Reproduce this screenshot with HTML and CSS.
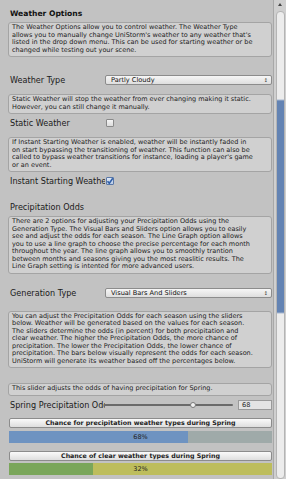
FILE: index.html
```html
<!DOCTYPE html>
<html>
<head>
<meta charset="utf-8">
<link rel="stylesheet" href="styles.css">
</head>
<body>
<div class="frame">
  <div class="content">
    <div class="title">Weather Options</div>
    <div class="help h1">The Weather Options allow you to control weather. The Weather Type<br>allows you to manually change UniStorm's weather to any weather that's<br>listed in the drop down menu. This can be used for starting weather or be<br>changed while testing out your scene.</div>

    <div class="row r-wtype">
      <div class="label">Weather Type</div>
      <div class="dropdown"><span>Partly Cloudy</span><span class="arrows">&#x2195;</span></div>
    </div>

    <div class="help h2">Static Weather will stop the weather from ever changing making it static.<br>However, you can still change it manually.</div>

    <div class="row r-static">
      <div class="label">Static Weather</div>
      <div class="check"></div>
    </div>

    <div class="help h3">If Instant Starting Weather is enabled, weather will be instantly faded in<br>on start bypassing the transitioning of weather. This function can also be<br>called to bypass weather transitions for instance, loading a player's game<br>or an event.</div>

    <div class="row r-instant">
      <div class="label">Instant Starting Weather</div>
      <div class="check checked"><svg viewBox="0 0 8 8" width="8" height="8"><path d="M1.5 4.2 L3.3 6.2 L6.8 1.2" fill="none" stroke="#2f5fa8" stroke-width="1.6"/></svg></div>
    </div>

    <div class="section">Precipitation Odds</div>
    <div class="help h4">There are 2 options for adjusting your Precipitation Odds using the<br>Generation Type. The Visual Bars and Sliders option allows you to easily<br>see and adjust the odds for each season. The Line Graph option allows<br>you to use a line graph to choose the precise percentage for each month<br>throughout the year. The line graph allows you to smoothly trantion<br>between months and seasons giving you the most reaslitic results. The<br>Line Graph setting is intented for more advanced users.</div>

    <div class="row r-gtype">
      <div class="label">Generation Type</div>
      <div class="dropdown"><span>Visual Bars And Sliders</span><span class="arrows">&#x2195;</span></div>
    </div>

    <div class="help h5">You can adjust the Precipitation Odds for each season using the sliders<br>below. Weather will be generated based on the values for each season.<br>The sliders determine the odds (in percent) for both precipitation and<br>clear weather. The higher the Precipitation Odds, the more chance of<br>precipitation. The lower the Precipitation Odds, the lower chance of<br>precipitation. The bars below visually represent the odds for each season.<br>UniStorm will generate its weather based off the percentages below.</div>

    <div class="help h6">This slider adjusts the odds of having precipitation for Spring.</div>

    <div class="row r-slider">
      <div class="label">Spring Precipitation Odds</div>
      <div class="slider"><div class="track"></div><div class="thumb"></div></div>
      <div class="num">68</div>
    </div>

    <div class="button b1">Chance for precipitation weather types during Spring</div>
    <div class="bar bar-precip"><div class="fill" style="width:68%"></div><span>68%</span></div>

    <div class="button b2">Chance of clear weather types during Spring</div>
    <div class="bar bar-clear"><div class="fill" style="width:32%"></div><span>32%</span></div>
  </div>
  <div class="scrollbar">
    <div class="up"></div>
    <div class="sb-track"><div class="sb-thumb"></div></div>
  </div>
</div>
</body>
</html>
```

FILE: styles.css
```css
* { box-sizing: border-box; }
html, body { margin: 0; padding: 0; }
body {
  width: 286px;
  height: 479px;
  overflow: hidden;
  background: #c2c2c2;
  font-family: "DejaVu Sans", Verdana, sans-serif;
  color: #1e1e1e;
}
.frame {
  display: flex;
  width: 286px;
  height: 479px;
}
.content {
  width: 273px;
  padding: 0 1px 0 8px;
  display: flex;
  flex-direction: column;
}
.title {
  margin-top: 9px;
  margin-left: 2px;
  font-weight: bold;
  font-size: 7.6px;
  line-height: 9px;
  height: 9px;
  color: #111;
}
.help {
  background: #d0d0d0;
  border: 1px solid #a4a4a4;
  border-radius: 3px;
  padding: 1px 2px 2px 3px;
  font-size: 6.5px;
  line-height: 7.5px;
  white-space: nowrap;
  overflow: hidden;
  color: #222;
}
.h1 { margin-top: 4px; }
.h2 { margin-top: 9px; }
.h3 { margin-top: 9px; }
.h4 { margin-top: 4px; }
.h5 { margin-top: 13px; }
.h6 { margin-top: 15px; }

.row {
  display: flex;
  align-items: center;
  height: 10px;
}
.label {
  width: 97px;
  flex: none;
  padding-left: 2px;
  font-size: 8.1px;
  line-height: 10px;
  white-space: nowrap;
  overflow: hidden;
  color: #1a1a1a;
}
.r-wtype { margin-top: 18px; }
.r-static { margin-top: 4px; }
.r-instant { margin-top: 4px; }
.r-gtype { margin-top: 14px; }
.r-slider { margin-top: 4px; }

.section {
  margin-top: 17px;
  padding-left: 2px;
  font-size: 8.1px;
  line-height: 9px;
  height: 9px;
  color: #1a1a1a;
}

.dropdown {
  flex: 1;
  height: 10px;
  border: 1px solid #8c8c8c;
  border-radius: 2px;
  background: linear-gradient(#f6f6f6, #dedede);
  display: flex;
  justify-content: space-between;
  align-items: center;
  padding: 0 3px 0 5px;
  font-size: 6.6px;
  line-height: 8px;
  color: #111;
}
.arrows {
  font-size: 5px;
  color: #333;
}

.check {
  width: 8px;
  height: 8px;
  margin-left: 1px;
  border: 1px solid #8a8a8a;
  border-radius: 1px;
  background: linear-gradient(#f5f5f5, #dcdcdc);
  position: relative;
}
.check svg {
  position: absolute;
  left: -1px;
  top: -1px;
}
.checked {
  background: linear-gradient(#dfe8f5, #b9cbe6);
  border-color: #5a78a8;
}

.slider {
  flex: 1;
  height: 10px;
  position: relative;
  margin-left: -1px;
}
.slider .track {
  position: absolute;
  left: 0;
  right: 3px;
  top: 4px;
  height: 2px;
  background: #6a6a6a;
  border-radius: 1px;
}
.slider .thumb {
  position: absolute;
  left: 86px;
  top: 2px;
  width: 6px;
  height: 6px;
  border-radius: 50%;
  border: 1px solid #7a7a7a;
  background: #f2f2f2;
}
.num {
  width: 34px;
  height: 10px;
  margin-left: 2px;
  border: 1px solid #9a9a9a;
  background: #e4e4e4;
  font-size: 6.6px;
  line-height: 8px;
  padding-left: 3px;
}

.button {
  margin-left: 1px;
  height: 10px;
  border: 1px solid #8c8c8c;
  border-radius: 2px;
  background: linear-gradient(#fafafa, #dedede);
  font-size: 6.3px;
  font-weight: bold;
  line-height: 8px;
  text-align: center;
  color: #222;
  white-space: nowrap;
}
.b1 { margin-top: 8px; }
.b2 { margin-top: 8px; }

.bar {
  margin-left: 1px;
  height: 12px;
  position: relative;
  display: flex;
  align-items: center;
  justify-content: center;
  font-size: 6.5px;
  color: #222;
}
.bar .fill {
  position: absolute;
  left: 0;
  top: 0;
  bottom: 0;
}
.bar span { position: relative; }
.bar-precip { margin-top: 3px; background: #9faaa9; }
.bar-precip .fill { background: #6e93c1; }
.bar-clear { margin-top: 2px; background: #bdbd5c; }
.bar-clear .fill { background: #7aa65a; }

.scrollbar {
  width: 13px;
  height: 479px;
  border-left: 1px solid #a8a8a8;
  background: #cfcfcf;
  display: flex;
  flex-direction: column;
}
.up {
  height: 11px;
  position: relative;
}
.up::after {
  content: "";
  position: absolute;
  left: 4px;
  top: 3px;
  border-left: 2px solid transparent;
  border-right: 2px solid transparent;
  border-bottom: 3px solid #444;
}
.sb-track {
  flex: 1;
  padding: 0 1px 0 2px;
}
.sb-thumb {
  height: 100%;
  border-radius: 4px;
  background: linear-gradient(#ececec 0, #ececec 87px, #6383b3 89px, #6383b3 300px, #ececec 302px);
  border: 1px solid #b4b4b4;
}
```
